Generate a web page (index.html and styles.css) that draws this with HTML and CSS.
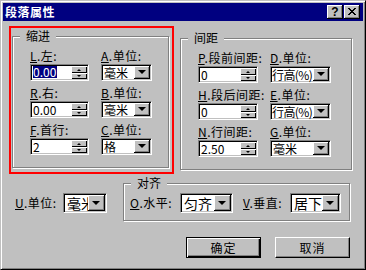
FILE: index.html
```html
<!DOCTYPE html>
<html lang="zh">
<head>
<meta charset="utf-8">
<title>段落属性</title>
<link rel="stylesheet" href="styles.css">
</head>
<body>
<div class="window">
  <div class="titlebar">
    <span class="title">段落属性</span>
    <div class="tb-buttons">
      <span class="tb-btn">?</span>
      <span class="tb-btn"><svg width="8" height="7" viewBox="0 0 8 7" shape-rendering="crispEdges"><path d="M0 0h2v1H0zM6 0h2v1H6zM1 1h2v1H1zM5 1h2v1H5zM2 2h4v1H2zM3 3h2v1H3zM2 4h4v1H2zM1 5h2v1H1zM5 5h2v1H5zM0 6h2v1H0zM6 6h2v1H6z" fill="#000"/></svg></span>
    </div>
  </div>
  <div class="content">
    <div class="top-row">
      <div class="highlight">
        <div class="group g-indent">
          <div class="group-title">缩进</div>
          <div class="fields f-indent">
            <div class="field">
              <div class="lbl"><u>L</u>.左:</div>
              <div class="sunken spin"><span class="val"><span class="sel">0.00</span></span><span class="spin-btns"><span class="sbtn up"></span><span class="sbtn dn"></span></span></div>
            </div>
            <div class="field">
              <div class="lbl"><u>A</u>.单位:</div>
              <div class="sunken combo"><span class="val">毫米</span><span class="drop"></span></div>
            </div>
            <div class="field">
              <div class="lbl"><u>R</u>.右:</div>
              <div class="sunken spin"><span class="val">0.00</span><span class="spin-btns"><span class="sbtn up"></span><span class="sbtn dn"></span></span></div>
            </div>
            <div class="field">
              <div class="lbl"><u>B</u>.单位:</div>
              <div class="sunken combo"><span class="val">毫米</span><span class="drop"></span></div>
            </div>
            <div class="field">
              <div class="lbl"><u>F</u>.首行:</div>
              <div class="sunken spin"><span class="val">2</span><span class="spin-btns"><span class="sbtn up"></span><span class="sbtn dn"></span></span></div>
            </div>
            <div class="field">
              <div class="lbl"><u>C</u>.单位:</div>
              <div class="sunken combo"><span class="val">格</span><span class="drop"></span></div>
            </div>
          </div>
        </div>
      </div>
      <div class="group g-spacing">
        <div class="group-title">间距</div>
        <div class="fields f-spacing">
          <div class="field">
            <div class="lbl"><u>P</u>.段前间距:</div>
            <div class="sunken spin"><span class="val">0</span><span class="spin-btns"><span class="sbtn up"></span><span class="sbtn dn"></span></span></div>
          </div>
          <div class="field">
            <div class="lbl"><u>D</u>.单位:</div>
            <div class="sunken combo"><span class="val tight">行高(%)</span><span class="drop"></span></div>
          </div>
          <div class="field">
            <div class="lbl"><u>H</u>.段后间距:</div>
            <div class="sunken spin"><span class="val">0</span><span class="spin-btns"><span class="sbtn up"></span><span class="sbtn dn"></span></span></div>
          </div>
          <div class="field">
            <div class="lbl"><u>E</u>.单位:</div>
            <div class="sunken combo"><span class="val tight">行高(%)</span><span class="drop"></span></div>
          </div>
          <div class="field">
            <div class="lbl"><u>N</u>.行间距:</div>
            <div class="sunken spin"><span class="val">2.50</span><span class="spin-btns"><span class="sbtn up"></span><span class="sbtn dn"></span></span></div>
          </div>
          <div class="field">
            <div class="lbl"><u>G</u>.单位:</div>
            <div class="sunken combo"><span class="val">毫米</span><span class="drop"></span></div>
          </div>
        </div>
      </div>
    </div>
    <div class="mid-row">
      <div class="u-field">
        <div class="lbl u-lbl"><u>U</u>.单位:</div>
        <div class="sunken combo big u-combo"><span class="val">毫米</span><span class="drop"></span></div>
      </div>
      <div class="group g-align">
        <div class="group-title">对齐</div>
        <div class="align-row">
          <div class="lbl o-lbl"><u>O</u>.水平:</div>
          <div class="sunken combo big h-combo"><span class="val">匀齐</span><span class="drop"></span></div>
          <div class="lbl v-lbl"><u>V</u>.垂直:</div>
          <div class="sunken combo big v-combo"><span class="val">居下</span><span class="drop"></span></div>
        </div>
      </div>
    </div>
    <div class="btn-row">
      <div class="btn default">确定</div>
      <div class="btn">取消</div>
    </div>
  </div>
</div>
</body>
</html>
```

FILE: styles.css
```css
* { box-sizing: border-box; }
html, body { margin: 0; padding: 0; }
body {
  width: 366px;
  height: 270px;
  overflow: hidden;
  background: #c0c0c0;
  font-family: "Noto Sans CJK SC", "Liberation Sans", sans-serif;
  font-size: 12px;
  color: #000;
}
.window {
  width: 366px;
  height: 270px;
  background: #c0c0c0;
  border: 1px solid;
  border-color: #c0c0c0 #000 #000 #c0c0c0;
  box-shadow: inset 1px 1px #fff, inset -1px -1px #808080;
  padding: 2px;
  display: flex;
  flex-direction: column;
}
.titlebar {
  height: 18px;
  flex-shrink: 0;
  background: #000080;
  display: flex;
  align-items: center;
  justify-content: space-between;
  padding: 0 3px 0 2px;
}
.title {
  color: #fff;
  font-weight: bold;
  font-size: 12px;
  line-height: 14px;
  letter-spacing: 0.5px;
}
.tb-buttons { display: flex; gap: 1px; }
.tb-btn {
  width: 16px;
  height: 14px;
  background: #c0c0c0;
  box-shadow: inset -1px -1px #000, inset 1px 1px #fff, inset -2px -2px #808080;
  display: flex;
  align-items: center;
  justify-content: center;
  font: bold 12px/14px "Liberation Sans", sans-serif;
  padding-bottom: 1px;
}
.content {
  flex: 1;
  padding: 5px 13px 0 6px;
  display: flex;
  flex-direction: column;
}
.top-row { display: flex; align-items: flex-start; }
.top-row > * { flex-shrink: 0; }
.highlight {
  width: 165px;
  height: 148px;
  border: 2px solid #ff0000;
  padding: 8px 0 0 1px;
}
.group {
  border: 1px solid #808080;
  box-shadow: inset 1px 1px #fff, 1px 1px #fff;
}
.g-indent { width: 157px; height: 132px; }
.g-spacing { width: 172px; height: 132px; margin: 12px 0 0 6px; }
.group-title {
  width: fit-content;
  margin: -8px 0 0 7px;
  padding: 0 6px;
  background: #c0c0c0;
  line-height: 14px;
}
.fields {
  display: grid;
  column-gap: 12px;
  row-gap: 5px;
  margin: 6px 0 0 17px;
}
.f-indent { grid-template-columns: 59px 51px; }
.f-spacing { grid-template-columns: 60px 61px; }
.lbl {
  line-height: 14px;
  height: 14px;
  white-space: nowrap;
  letter-spacing: 0.5px;
}
.field .lbl { margin-bottom: 1px; }
.sunken {
  background: #fff;
  border: 1px solid;
  border-color: #808080 #fff #fff #808080;
  box-shadow: inset 1px 1px #000, inset -1px -1px #c0c0c0;
  padding: 1px;
  display: flex;
}
.spin, .combo { height: 17px; }
.val {
  flex: 1;
  min-width: 0;
  line-height: 13px;
  padding-left: 1px;
  white-space: nowrap;
}
.val.tight { letter-spacing: -0.6px; padding-left: 0; }
.sel {
  display: inline-block;
  height: 12px;
  line-height: 12px;
  vertical-align: top;
  padding: 0 1px 0 0;
  background: #000080;
  color: #fff;
}
.spin-btns {
  width: 16px;
  flex-shrink: 0;
  display: flex;
  flex-direction: column;
}
.sbtn {
  flex: 1;
  background: #c0c0c0;
  box-shadow: inset 1px 1px #fff, inset -1px -1px #000;
  display: flex;
  align-items: center;
  justify-content: center;
}
.sbtn.up { flex: 0 0 7px; }
.sbtn.up::after {
  content: "";
  border-left: 2px solid transparent;
  border-right: 2px solid transparent;
  border-bottom: 2px solid #000;
}
.sbtn.dn::after {
  content: "";
  border-left: 2px solid transparent;
  border-right: 2px solid transparent;
  border-top: 2px solid #000;
}
.drop {
  width: 16px;
  flex-shrink: 0;
  background: #c0c0c0;
  box-shadow: inset -1px -1px #000, inset 1px 1px #fff, inset -2px -2px #808080;
  display: flex;
  align-items: center;
  justify-content: center;
}
.drop::after {
  content: "";
  border-left: 4px solid transparent;
  border-right: 4px solid transparent;
  border-top: 4px solid #000;
  margin: 0 1px 1px 0;
}
.combo.big { height: 20px; }
.combo.big .val { font-size: 14px; line-height: 16px; padding-left: 2px; }
.combo.big .drop { width: 17px; }
.mid-row { display: flex; align-items: flex-start; margin-top: 9px; }
.mid-row > * { flex-shrink: 0; }
.u-field { display: flex; align-items: center; margin: 10px 0 0 6px; }
.u-lbl { width: 48px; }
.u-combo { width: 44px; }
.g-align { width: 227px; height: 38px; margin-left: 16px; }
.align-row { display: flex; align-items: center; margin: 3px 0 0 6px; }
.o-lbl { width: 50px; }
.h-combo { width: 53px; }
.v-lbl { width: 47px; margin-left: 10px; }
.v-combo { width: 51px; }
.btn-row {
  display: flex;
  justify-content: flex-end;
  gap: 14px;
  margin-top: 16px;
}
.btn {
  width: 75px;
  height: 21px;
  background: #c0c0c0;
  border: 1px solid;
  border-color: #fff #000 #000 #fff;
  box-shadow: inset -1px -1px #808080;
  display: flex;
  align-items: center;
  justify-content: center;
  letter-spacing: 1px;
}
.btn.default {
  border: 1px solid #000;
  box-shadow: inset 1px 1px #fff, inset -1px -1px #000, inset -2px -2px #808080;
}
```
